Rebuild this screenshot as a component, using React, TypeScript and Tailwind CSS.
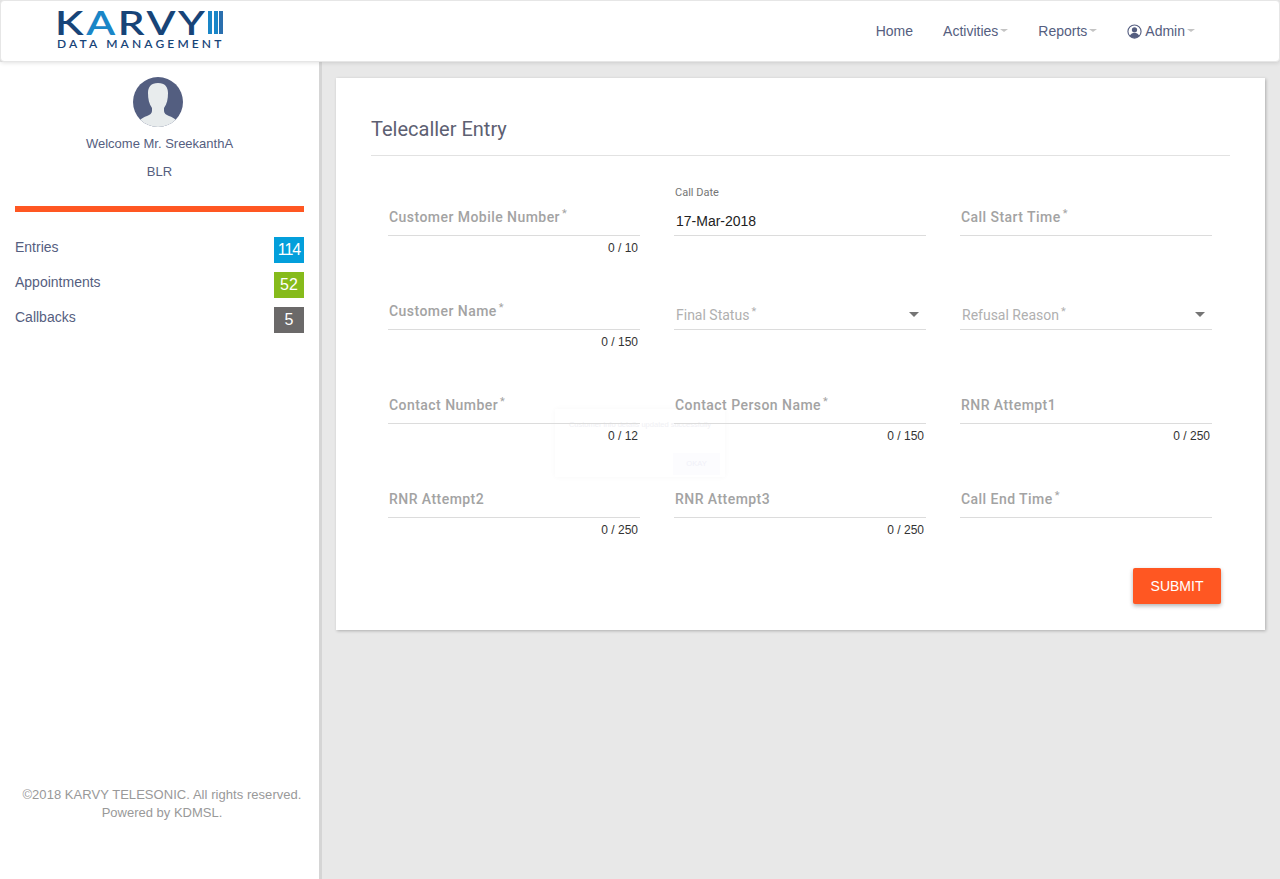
import React from "react";

const Caret = () => (
  <span className="ml-[2px] inline-block w-0 h-0 border-x-[4px] border-x-transparent border-t-[3px] border-t-[#c4c4c4] translate-y-[-1px]" />
);

const SelectArrow = () => (
  <span className="w-0 h-0 border-x-[5px] border-x-transparent border-t-[5px] border-t-[#757575]" />
);

const Logo = () => (
  <div className="flex flex-col w-[168px] mb-[3px] font-['Lato',sans-serif]">
    <div className="flex items-center justify-between h-[23px]">
      <span className="w-[148px] inline-block origin-left scale-x-[1.32] text-[32px] leading-[23px] font-semibold text-[#174478] tracking-[2px] whitespace-nowrap">
        K<span className="text-[#1a86c7]">A</span>RVY
      </span>
      <span className="flex gap-[1.5px] h-[23px]">
        <span className="w-[4px] bg-[#1a86c7]" />
        <span className="w-[4px] bg-[#1a86c7]" />
        <span className="w-[4px] bg-[#2a6fae]" />
      </span>
    </div>
    <span className="mt-[5px] ml-[2px] text-[12px] leading-[9px] font-semibold text-[#174478] tracking-[3.15px] whitespace-nowrap">DATA MANAGEMENT</span>
  </div>
);

const Avatar = () => (
  <svg viewBox="0 0 50 50" className="w-[50px] h-[50px]">
    <defs>
      <clipPath id="avatar-clip">
        <circle cx="25" cy="25" r="25" />
      </clipPath>
    </defs>
    <circle cx="25" cy="25" r="25" fill="#535e80" />
    <path
      clipPath="url(#avatar-clip)"
      d="M25 6c-7 0-10 4-10 10 0 6 1 11 4 15v3c0 2-2 4-5 5-3 1-5 2-7 4l7 8h22l7-8c-2-2-4-3-7-4-3-1-5-3-5-5v-3c3-4 4-9 4-15 0-6-3-10-10-10z"
      fill="#e8eced"
    />
  </svg>
);

const SideRow = ({ label, count, color }: { label: string; count: string; color: string }) => (
  <div className="flex justify-between h-[26px] text-[14px] text-[#555e80]">
    <span className="leading-[20px]">{label}</span>
    <span className={`w-[30px] h-[26px] flex items-center justify-center text-white text-[16px] ${count.length > 2 ? "tracking-[-1px]" : ""} ${color}`}>{count}</span>
  </div>
);

const Sidebar = () => (
  <aside className="w-[322px] shrink-0 bg-white border-r-[3px] border-[#d5d5d5] flex flex-col px-[15px] pt-[15px] pb-[57px]">
    <div className="flex justify-center pr-[3px]">
      <Avatar />
    </div>
    <p className="mt-[7px] text-center text-[13px] leading-[20px] text-[#555e80]">Welcome Mr. SreekanthA</p>
    <p className="mt-[8px] text-center text-[13px] leading-[20px] text-[#555e80]">BLR</p>
    <div className="mt-[24px] h-[6px] w-[289px] bg-[#ff5722]" />
    <div className="mt-[25px] w-[289px] flex flex-col gap-[9px]">
      <SideRow label="Entries" count="114" color="bg-[#039fdb]" />
      <SideRow label="Appointments" count="52" color="bg-[#86bb1b]" />
      <SideRow label="Callbacks" count="5" color="bg-[#6b6969]" />
    </div>
    <div className="mt-auto text-center text-[13px] leading-[18px] text-[#999] pl-[5px] whitespace-nowrap">
      <p className="tracking-[0.05px]">©2018 KARVY TELESONIC. All rights reserved.</p>
      <p>Powered by KDMSL.</p>
    </div>
  </aside>
);

const Req = () => <sup className="text-[11px] ml-[2px] top-[-5px] font-normal">*</sup>;

const TextField = ({ label, req, count }: { label: string; req?: boolean; count?: string }) => (
  <div className="h-[94px]">
    <div className="h-[58px] border-b border-[#dcdcdc] flex items-end pb-[8px] pl-[1px]">
      <span className="text-[14px] leading-[20px] font-medium text-[#a3a3a3] tracking-[0.45px] font-['Roboto',sans-serif]">
        {label}
        {req && <Req />}
      </span>
    </div>
    {count && <div className="mt-[5px] pr-[2px] text-right text-[12px] leading-[14px] text-[#333]">{count}</div>}
  </div>
);

const SelectField = ({ label }: { label: string }) => (
  <div className="h-[94px]">
    <div className="h-[58px] border-b border-[#dcdcdc] flex items-end justify-between pb-[4px] pl-[2px] pr-[7px]">
      <span className="text-[14px] leading-[20px] text-[#b0b0b0] font-['Roboto',sans-serif]">
        {label}
        <Req />
      </span>
      <span className="mb-[8px] flex">
        <SelectArrow />
      </span>
    </div>
  </div>
);

const DateField = () => (
  <div className="h-[94px]">
    <div className="h-[58px] border-b border-[#dcdcdc] flex flex-col pl-[1px]">
      <span className="mt-[8px] text-[11px] leading-[13px] text-[#757575] font-['Roboto',sans-serif]">Call Date</span>
      <span className="mt-[13px] pl-[1px] text-[14px] leading-[18px] text-[#222]">17-Mar-2018</span>
    </div>
  </div>
);

const Form = () => (
  <section className="relative w-[929px] bg-white shadow-[1px_1px_3px_rgba(0,0,0,0.25)] px-[35px] pt-[38px] h-[552px]">
    <h1 className="text-[20px] leading-[26px] text-[#5d6072] font-['Roboto',sans-serif] pb-[13px] border-b border-[#e2e2e2]">Telecaller Entry</h1>
    <div className="relative z-10 mt-[22px] px-[17px] grid grid-cols-[252px_252px_252px] gap-x-[34px]">
      <TextField label="Customer Mobile Number" req count="0 / 10" />
      <DateField />
      <TextField label="Call Start Time" req />
      <TextField label="Customer Name" req count="0 / 150" />
      <SelectField label="Final Status" />
      <SelectField label="Refusal Reason" />
      <TextField label="Contact Number" req count="0 / 12" />
      <TextField label="Contact Person Name" req count="0 / 150" />
      <TextField label="RNR Attempt1" count="0 / 250" />
      <TextField label="RNR Attempt2" count="0 / 250" />
      <TextField label="RNR Attempt3" count="0 / 250" />
      <TextField label="Call End Time" req />
    </div>
    <div className="flex justify-end pr-[9px] mt-[14px]">
      <button className="w-[88px] h-[36px] rounded-[2px] bg-[#ff5722] text-white text-[14px] shadow-[0_2px_4px_rgba(0,0,0,0.3)]">SUBMIT</button>
    </div>
    {/* toast fading out behind the form */}
    <div className="absolute left-[219px] top-[331px] w-[170px] h-[68px] bg-white shadow-[0_0_6px_rgba(0,0,0,0.03)] pointer-events-none">
      <p className="mt-[11px] text-center text-[7.5px] leading-[10px] text-[#f0f0f4] whitespace-nowrap">Customer info details updated successfully</p>
      <span className="absolute right-[5px] bottom-[2px] w-[47px] h-[22px] flex items-center justify-center bg-[#fcfcfe] text-[7.5px] text-[#f0f0f8]">OKAY</span>
    </div>
  </section>
);

export default function App() {
  return (
    <div className="h-screen overflow-hidden flex flex-col bg-[#e8e8e8] font-['Liberation_Sans',sans-serif]">
      <header className="relative z-10 h-[62px] shrink-0 bg-white border border-[#e6e6e6] rounded-[4px] shadow-[0_1px_4px_rgba(0,0,0,0.12)] flex items-center pl-[54px]">
        <Logo />
        <nav className="ml-auto mr-[84px] flex items-center gap-[30px] text-[14px] text-[#555e80]">
          <a>Home</a>
          <a className="flex items-center">Activities<Caret /></a>
          <a className="flex items-center">Reports<Caret /></a>
          <a className="flex items-center">
            <svg viewBox="0 0 16 16" className="w-[15px] h-[15px] mr-[3px]">
              <circle cx="8" cy="8" r="7" fill="none" stroke="#555e80" strokeWidth="1.2" />
              <circle cx="8" cy="6.2" r="2.8" fill="#555e80" />
              <path d="M3 12.500c1-2.500 3-3 5-3s4 .5 5 3c-1.200 1.500-3 2.300-5 2.300s-3.800-.8-5-2.300z" fill="#555e80" />
            </svg>
            Admin<Caret />
          </a>
        </nav>
      </header>
      <div className="flex flex-1 min-h-0">
        <Sidebar />
        <main className="flex-1 pl-[14px] pt-[16px]">
          <Form />
        </main>
      </div>
    </div>
  );
}
